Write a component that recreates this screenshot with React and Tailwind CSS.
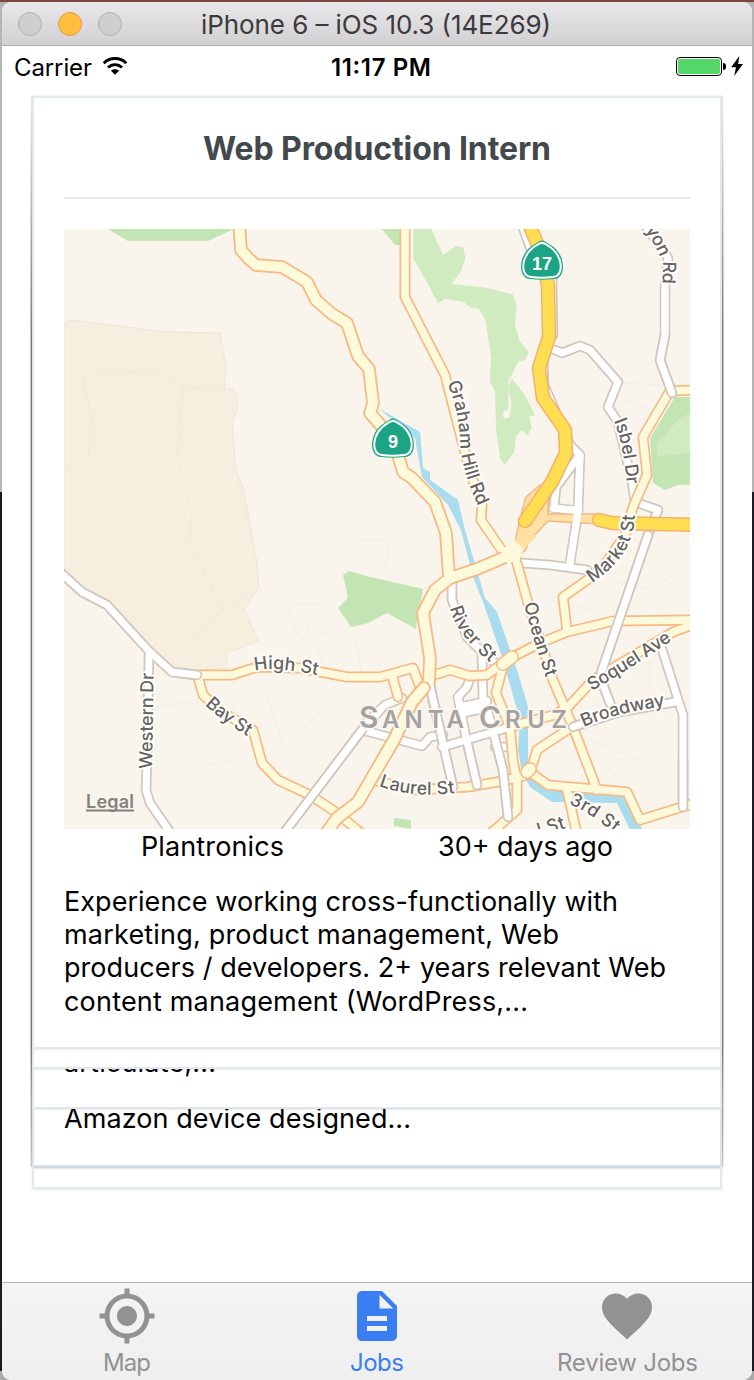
import React from "react";

const minor = [
  "M645 225 668 258 665 285 665 335 660 360 672 393",
  "M522 225 534 258 M552 275 553 335 M543 350 544 385 570 445 580 455",
  "M578 457 555 488 553 508 578 511",
  "M580 455 578 511 570 563",
  "M555 350 562 353 580 346 590 350 618 382 608 407 618 422 632 482 635 502 658 510 648 535 603 667 600 677 610 703",
  "M522 563 550 565 587 570",
  "M60 572 82 592 107 605 148 650 172 672 197 675",
  "M149 655 147 763 146 790 150 803 170 832",
  "M284 833 362 730 380 710 M362 730 422 746 430 737 443 735",
  "M402 698 385 705 365 724",
  "M452 580 452 600 467 637 483 653 500 667",
  "M482 657 483 697 492 727 503 770 508 817",
  "M430 684 440 730 453 787",
  "M470 678 467 687 458 697 465 733 477 785",
  "M442 747 507 728 M460 707 487 701 M462 713 487 708 M495 747 512 747",
  "M573 727 620 712 675 702",
  "M660 643 683 715 683 807",
];

const major = [
  "M405 225 405 297 445 375 463 445 470 472 482 505 481 520 503 552",
  "M695 390 670 391 643 437 647 475 633 507 625 535 603 567 587 580 563 597 567 630",
  "M503 663 513 657 540 643 567 632 613 621 695 620",
  "M695 624 673 632 593 680 568 707 554 715 505 728",
  "M513 550 518 567 528 603 553 680 573 727 597 790",
  "M200 675 232 675 257 667 300 668 347 677 380 677 413 668 420 687",
  "M392 675 398 697 M434 675 450 670 470 676 487 675 503 663",
  "M198 677 203 695 222 712 253 730 262 763 278 780 310 795 337 813 362 834",
  "M503 666 496 693 510 727 513 760 517 783 517 810 490 834",
  "M373 780 413 790 467 787 503 781 527 775",
  "M570 728 537 750 530 772 548 785 627 792 640 820 695 803",
  "M567 790 577 834",
];

const trunk = [
  "M239 222 241 250 249 259 256 265 282 267 307 282 316 300 332 314 347 323 358 356 369 369 373 403 370 413 390 436 398 455 403 472 412 478 435 502 446 533 449 577",
  "M521 546 503 558 477 569 450 578 435 590 423 613 430 658 429 682 412 702 395 738 358 802 337 818 324 836",
];

const labels = [
  { id: "graham", t: "Graham Hill Rd", d: "M447 383 Q459 410 460 443 Q462 472 480 510", len: 128 },
  { id: "yon", t: "yon Rd", d: "M645 230 Q660 252 663 266 L662 296", len: 58 },
  { id: "isbel", t: "Isbel Dr", d: "M614 421 Q624 445 628 495", len: 65 },
  { id: "market", t: "Market St", d: "M592 583 Q622 563 630 540 Q637 523 634 495", len: 84 },
  { id: "high", t: "High St", d: "M255 671 Q275 665 330 678", len: 63 },
  { id: "bay", t: "Bay St", d: "M205 705 Q224 723 262 745", len: 53 },
  { id: "western", t: "Western Dr", d: "M152 769 154 655", len: 96 },
  { id: "river", t: "River St", d: "M450 608 Q456 637 503 673", len: 69 },
  { id: "ocean", t: "Ocean St", d: "M524 604 Q533 640 551 692", len: 77 },
  { id: "soquel", t: "Soquel Ave", d: "M592 691 Q632 668 684 632", len: 95 },
  { id: "broadway", t: "Broadway", d: "M584 727 Q615 712 680 704", len: 84 },
  { id: "laurel", t: "Laurel St", d: "M379 786 Q418 801 475 790", len: 77 },
  { id: "third", t: "3rd St", d: "M569 804 Q590 812 628 844", len: 54 },
  { id: "st", t: "l St", d: "M539 836 580 824", len: 28 },
];

function Shield({ x, y, n }) {
  return (
    <g transform={`translate(${x} ${y})`}>
      <path
        d="M0-20.5C2-20.5 3-19.5 5-18.3 13-14 20-8 21 5 21 13 18 17.5 12 18 4 19-4 19-12 18-18 17.5-21 13-21 5-20-8-13-14-5-18.3-3-19.5-2-20.5 0-20.5Z"
        fill="#1ba584"
      />
      <path
        d="M0-18.3C2-18 3-17 4.500-16.300 12-12 18-6 18.800 5 18.800 12 16.500 15.500 11 16 4 16.800-4 16.800-11 16-16.500 15.500-18.800 12-18.800 5-18-6-12-12-4.500-16.300-3-17-2-18 0-18.300Z"
        fill="#1ba584"
        stroke="#fff"
        strokeWidth="2"
      />
      <text y="8.500" textAnchor="middle" fontSize="18" fontWeight="700" fill="#fff" fontFamily="'Liberation Sans', sans-serif">
        {n}
      </text>
    </g>
  );
}

function Roads({ list, outer, inner, casing, fill }) {
  return (
    <g fill="none" strokeLinejoin="round" strokeLinecap="round">
      {list.map((d) => (
        <path key={d} d={d} stroke={casing} strokeWidth={outer} />
      ))}
      {list.map((d) => (
        <path key={d} d={d} stroke={fill} strokeWidth={inner} />
      ))}
    </g>
  );
}

function MapView() {
  return (
    <svg
      viewBox="64 229 626 600"
      width="626"
      height="600"
      className="block shrink-0"
      fontFamily="Inter, 'Liberation Sans', sans-serif"
    >
      <rect x="64" y="229" width="626" height="600" fill="#f9f4ec" />
      <path
        d="M64 322 73 320 165 332 220 333 226 368 224 389 233 389 237 396 237 410 232 422 236 470 244 490 251 530 257 563 259 588 252 597 244 609 259 641 226 653 228 668 202 670 170 673 108 605 64 577Z"
        fill="#f6eedf"
        stroke="#f0e5d8"
      />
      <path
        d="M64 468 80 467 88 460 93 425 83 379 110 370 140 373 158 370 183 387 224 390M183 387 177 457 192 515 189 545 224 610 252 592M224 610 194 635 194 670M236 470 256 558"
        fill="none"
        stroke="#f3e9db"
      />
      <g fill="none" stroke="#f4eee5">
        <path d="M287 604 320 604 347 643 400 643M287 604 300 640 335 630M197 680 197 767 232 760 232 690M155 708 197 700M307 627 340 700M265 690 285 750 330 700M300 750 350 800M353 540 390 540 385 570M356 640 362 680 M400 500 430 520M500 590 520 620M530 580 550 600 590 610M560 640 600 670M610 580 650 590 680 570M625 640 650 660 650 690M590 740 640 760 660 730M600 760 675 760M580 740 620 780M420 700 450 715M320 690 350 710M620 383 665 385M625 400 650 410" />
      </g>
      <path d="M108 229 128 241 208 241 234 229ZM382 229 395 245 400 245 400 229ZM343 575 349 571 370 577 423 589 416 629 387 613 368 623 351 627 338 608 348 598ZM394 818 411 820 411 829 394 826ZM690 397 675 397 650 438 653 483 665 490 678 485 690 485Z" fill="#c3e5b3" />
      <path d="M690 413 680 418 657 443 657 457 690 452Z" fill="#d0ebc0" />
      <g transform="translate(370 225) scale(.33333)">
        <path
          d="M130 12H183L220 90 258 62 280 68 286 100 275 135 245 177 350 188 428 208 440 240 435 300 450 350 477 380 465 405 445 410 415 470V555L400 558V580L418 578 425 540 415 490 425 460 465 510 495 570 478 575 485 610 472 632 455 615 437 635 433 680 405 720 390 700 378 610 375 500 360 470 363 400 347 285 325 250 305 250 280 230 225 222 205 235 130 100Z"
          fill="#d0ebc0"
        />
      </g>
      <path
        d="M378 408 420 432 423 468 430 472 430 480 458 500 465 530 485 598 497 612 518 673 528 707 528 760 540 785 570 790 623 796 643 830H630L617 803 552 802 530 787 522 773 518 750 520 720 503 660 483 602 473 577 461 530 448 505 422 477 415 438Z"
        fill="#a9dcee"
      />

      <Roads list={minor} outer={10.5} inner={7} casing="#d0c7bd" fill="#fff" />
      <path
        d="M514 548 519 523 526 497 540 485 549 488 548 514 597 514 597 524 548 521 530 540Z"
        fill="#ffe0a5"
        stroke="#f6b783"
        strokeWidth="1.500"
      />
      <path d="M577 459 556 487 554 508" fill="none" stroke="#d0c7bd" strokeWidth="10.500" />
      <path d="M577 459 556 487 554 508 M580 456 578 511 570 563M553 506 554 508 582 511" fill="none" stroke="#fff" strokeWidth="7" />
      <Roads list={major} outer={11} inner={7.6} casing="#f6ba82" fill="#fdfadb" />
      <Roads list={trunk} outer={13.6} inner={10} casing="#f6ba82" fill="#fdfadb" />
      <path d="M532 532 516 548" stroke="#ffe0a5" strokeWidth="13" />
      <path d="M503 551 514 543 521 549 518 558 508 561Z" fill="#fdfadb" stroke="#fdfadb" strokeWidth="4" strokeLinejoin="round" />
      <path d="M527 772 530 769M503 664 512 657" stroke="#f6ba82" strokeWidth="14" strokeLinecap="round" />
      <path d="M527 772 530 769M503 664 512 657" stroke="#fdfadb" strokeWidth="11" strokeLinecap="round" />
      <g fill="none" strokeLinecap="round" strokeLinejoin="round">
        <path d="M284 833 362 730M648 535 603 667 600 677 610 703M430 689 440 730 453 787M465 733 477 785M492 727 503 770 508 817M573 727 590 721M197 675 180 673M665 335 660 360 672 393M683 760 683 807" stroke="#d0c7bd" strokeWidth="10.500" />
        <path d="M284 833 362 730 380 710M648 535 603 667 600 677 610 703M430 686 440 730 453 787M458 697 465 733 477 785M483 697 492 727 503 770 508 817M442 747 507 728M573 727 590 721M197 675 172 672M665 290 665 335 660 360 672 393M683 755 683 807" stroke="#fff" strokeWidth="7" />
      </g>
      <Roads list={["M362 795 395 738 412 702 424 688"]} outer={13.6} inner={10} casing="#f6ba82" fill="#fdfadb" />
      <path d="M358 802 395 738" stroke="#fdfadb" strokeWidth="10" />
      <Roads
        list={["M528 222 542 255 548 285 549 337 539 368 543 398 565 430 566 453 552 482 525 521", "M599 520 612 523 700 525"]}
        outer={14.5}
        inner={11.5}
        casing="#f6b06c"
        fill="#ffdf51"
      />

      <g fontSize="18" fontWeight="450" fill="#646363" stroke="#fffdf8" strokeWidth="4" strokeLinejoin="round" paintOrder="stroke">
        {labels.map((l) => (
          <g key={l.id}>
            <path id={l.id} d={l.d} fill="none" stroke="none" />
            <text textLength={l.len}>
              <textPath href={`#${l.id}`} textLength={l.len}>
                {l.t}
              </textPath>
            </text>
          </g>
        ))}
      </g>
      <g fontWeight="600" fill="#a5a29f" stroke="#fbf8f2" strokeWidth="3" paintOrder="stroke">
        <text x="359" y="727.500" fontSize="30">S</text>
        <text x="382" y="727.500" fontSize="24" textLength="82">ANTA</text>
        <text x="479" y="727.500" fontSize="30">C</text>
        <text x="505" y="727.500" fontSize="24" textLength="62">RUZ</text>
      </g>
      <Shield x={542} y={261} n="17" />
      <Shield x={393} y={439} n="9" />
      <text x="86" y="808" fontSize="18" fontWeight="600" fill="#84827d" textLength="48">
        Legal
      </text>
      <path d="M86 810.500H134" stroke="#84827d" strokeWidth="1.800" />
    </svg>
  );
}

function TitleBar() {
  return (
    <header className="relative flex h-[44px] shrink-0 items-center justify-center rounded-t-[9px] border-b border-[#aeacae] bg-linear-to-b from-[#e9e7e9] to-[#d2d0d2]">
      <div className="absolute left-[16px] top-[10px] flex gap-4">
        <span className="size-6 rounded-full border border-[#b3b1b3] bg-[#d0cfd0]" />
        <span className="size-6 rounded-full border border-[#e0a03a] bg-[#ffbe40]" />
        <span className="size-6 rounded-full border border-[#b3b1b3] bg-[#d0cfd0]" />
      </div>
      <svg width="352" height="40" className="block" fontFamily="Inter, 'Liberation Sans', sans-serif">
        <text x="0" y="30" fontSize="26" fill="#3b393b" textLength="350">iPhone 6 – iOS 10.3 (14E269)</text>
      </svg>
    </header>
  );
}

function StatusBar() {
  return (
    <div className="grid h-[40px] shrink-0 grid-cols-3 items-center pl-3 pr-[9px] text-black">
      <div className="flex items-center gap-[10px] pt-[2px]">
        <svg width="78" height="32" className="block overflow-visible" fontFamily="Inter, 'Liberation Sans', sans-serif">
          <text y="24.500" fontSize="24" textLength="78">Carrier</text>
        </svg>
        <svg width="26" height="20" viewBox="0 0 26 20" fill="none" stroke="#000" className="-mt-[3px]">
          <path d="M1.800 7.200C8 1 18 1 24.200 7.200" strokeWidth="3" />
          <path d="M6 11.500C10 7.600 16 7.600 20 11.500" strokeWidth="2.900" />
          <path d="M13 18.800 9 14.700C11 12.700 15 12.700 17 14.700Z" fill="#000" stroke="none" />
        </svg>
      </div>
      <div className="flex justify-center pl-[5px] pt-[2px]">
        <svg width="100" height="32" className="block overflow-visible" fontFamily="Inter, 'Liberation Sans', sans-serif">
          <text y="24.500" fontSize="24" fontWeight="600" textLength="100">11:17 PM</text>
        </svg>
      </div>
      <div className="flex items-center justify-end gap-[5px]">
        <div className="flex items-center gap-px">
          <div className="h-[19px] w-[46px] rounded-[4px] border-[1.5px] border-black p-px">
            <div className="h-full rounded-[2px] bg-[#54d769]" />
          </div>
          <div className="h-[7px] w-[3px] rounded-r-full bg-black" />
        </div>
        <svg width="12" height="20" viewBox="0 0 12 20">
          <path d="M8.300 0 .2 11.200H5L3.200 20 12 8H7.200Z" />
        </svg>
      </div>
    </div>
  );
}

function Line({ children, w }) {
  return (
    <svg width={w} height="33.400" className="block overflow-visible" fontFamily="Inter, 'Liberation Sans', sans-serif">
      <text y="26" fontSize="27" textLength={w}>{children}</text>
    </svg>
  );
}

function Edge({ className }) {
  return (
    <div className={`flex h-[1071px] w-[2px] shrink-0 ${className}`}>
      <span className="w-px bg-[linear-gradient(transparent_10px,rgba(0,0,0,0.22)_220px,rgba(0,0,0,0.22)_953px,rgba(0,0,0,0.05)_1071px)]" />
      <span className="w-px bg-[linear-gradient(rgba(0,0,0,0.04),rgba(0,0,0,0.5)_240px,rgba(0,0,0,0.5)_953px,rgba(0,0,0,0.15)_1071px)]" />
    </div>
  );
}

function Tab({ label, color, w, children }) {
  return (
    <div className={`flex flex-1 flex-col items-center pt-[3px] ${color}`}>
      <svg width="60" height="60" viewBox="0 0 24 24" fill="currentColor" className="mb-[2px] block">
        {children}
      </svg>
      <svg width={w} height="32" className="block overflow-visible" fontFamily="Inter, 'Liberation Sans', sans-serif">
        <text y="23" fontSize="24" fill="currentColor" textLength={w}>{label}</text>
      </svg>
    </div>
  );
}

export default function App() {
  return (
    <div className="h-[1380px] w-[754px] overflow-hidden bg-[linear-gradient(#7c4543_0_2px,#b5b4b6_2px_492px,#1b1b25_492px_1371px,#aaa_1371px)] px-[2px] pt-[2px] font-['Inter','Liberation_Sans',sans-serif]">
      <div className="flex h-[1378px] flex-col overflow-hidden rounded-[9px] bg-white">
        <TitleBar />
        <StatusBar />
        <main className="flex flex-1 justify-center pt-[10px]">
          <Edge className="" />
          <div className="flex w-[690px] flex-col">
            <article className="flex h-[953px] shrink-0 flex-col border-2 border-[#e1e8ee] px-[30px] shadow-[0_0_3px_rgba(0,0,0,0.12)]">
              <h1 className="flex h-[101px] shrink-0 items-center justify-center border-b-2 border-[#e1e8ee]">
                <svg width="349" height="44" className="block overflow-visible" fontFamily="Inter, 'Liberation Sans', sans-serif">
                  <text y="34" fontSize="32" fontWeight="700" fill="#43484d" textLength="348">Web Production Intern</text>
                </svg>
              </h1>
              <div className="mt-[30px]">
                <MapView />
              </div>
              <div className="flex h-[55px] shrink-0 justify-around pt-px">
                <Line w={143}>Plantronics</Line>
                <Line w={175}>30+ days ago</Line>
              </div>
              <div className="flex flex-col pt-[0.5px]">
                <Line w={554}>Experience working cross-functionally with</Line>
                <Line w={495}>marketing, product management, Web</Line>
                <Line w={602}>producers / developers. 2+ years relevant Web</Line>
                <Line w={464}>content management (WordPress,...</Line>
              </div>
            </article>
            <div className="h-5 shrink-0 border-x-2 border-b-2 border-[#e1e8ee] shadow-[0_1px_2px_rgba(0,0,0,0.08)]" />
            <div className="flex h-10 shrink-0 items-start overflow-hidden border-x-2 border-b-2 border-[#e1e8ee] px-[30px] shadow-[0_1px_2px_rgba(0,0,0,0.08)]">
              <div className="-mt-[23px]"><Line w={152}>articulate,...</Line></div>
            </div>
            <div className="h-[58px] shrink-0 overflow-hidden border-x-2 border-b-2 border-[#dce4eb] px-[30px] shadow-[0_1px_2px_rgba(60,90,120,0.4)]">
              <div className="-mt-[7px]"><Line w={347}>Amazon device designed...</Line></div>
            </div>
            <div className="h-[22px] shrink-0 border-x-2 border-b-2 border-[#e1e8ee] shadow-[0_1px_2px_rgba(0,0,0,0.1)]" />
          </div>
          <Edge className="flex-row-reverse" />
        </main>
        <nav className="flex h-[98px] shrink-0 border-t border-[#b2b2b2] bg-linear-to-b from-[#f4f4f4] to-[#efefef]">
          <Tab label="Map" color="text-[#929292]" w={48}>
            <path d="M12 8c-2.210 0-4 1.790-4 4s1.790 4 4 4 4-1.790 4-4-1.790-4-4-4zm8.940 3c-.46-4.170-3.770-7.480-7.940-7.940V1h-2v2.060C6.830 3.520 3.520 6.830 3.060 11H1v2h2.060c.46 4.170 3.770 7.480 7.940 7.940V23h2v-2.060c4.170-.46 7.480-3.770 7.940-7.940H23v-2h-2.060zM12 19c-3.870 0-7-3.130-7-7s3.130-7 7-7 7 3.130 7 7-3.130 7-7 7z" />
          </Tab>
          <Tab label="Jobs" color="text-[#3b7df3]" w={54}>
            <path d="M14 2H6c-1.100 0-1.990.9-1.990 2L4 20c0 1.100.89 2 1.990 2H18c1.100 0 2-.9 2-2V8l-6-6zm2 16H8v-2h8v2zm0-4H8v-2h8v2zm-3-5V3.500L18.500 9H13z" />
          </Tab>
          <Tab label="Review Jobs" color="text-[#929292]" w={141}>
            <path d="M12 21.350l-1.450-1.320C5.400 15.360 2 12.280 2 8.500 2 5.420 4.420 3 7.500 3c1.740 0 3.410.81 4.500 2.090C13.090 3.810 14.760 3 16.500 3 19.580 3 22 5.420 22 8.500c0 3.780-3.400 6.860-8.550 11.540L12 21.350z" />
          </Tab>
        </nav>
      </div>
    </div>
  );
}
